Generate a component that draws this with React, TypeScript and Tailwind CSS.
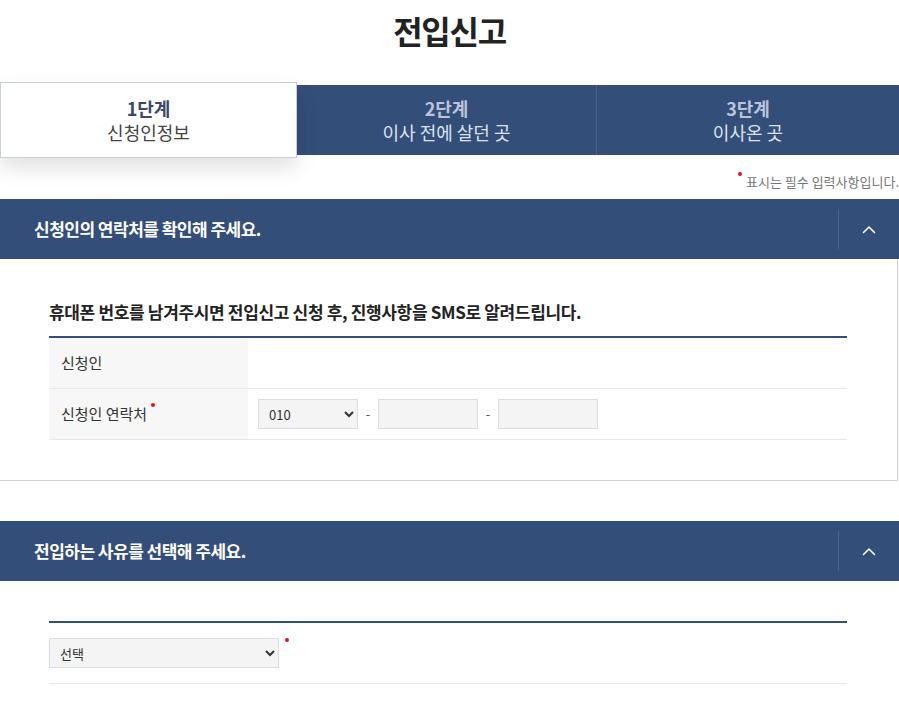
import React from 'react'

const NAVY = 'bg-[#344e7a]'

function Chevron() {
  return (
    <svg width="14" height="9" viewBox="0 0 14 9" fill="none" stroke="white" strokeWidth="1.6" strokeLinecap="round" strokeLinejoin="round">
      <path d="M1.5 7.5L7 2l5.5 5.5" />
    </svg>
  )
}

function SectionHeader({ title }: { title: string }) {
  return (
    <div className={`${NAVY} h-[60px] flex items-center`}>
      <h2 className="flex-1 pl-[34px] text-white text-[17px] font-bold tracking-[-0.03em]">{title}</h2>
      <div className="h-[40px] w-px bg-[#4b6390]" />
      <button className="w-[60px] h-full flex items-center justify-center">
        <Chevron />
      </button>
    </div>
  )
}

function Dot() {
  return <span className="block w-[4px] h-[4px] rounded-full bg-[#e0141e]" />
}

export default function App() {
  return (
    <div className="w-[899px] bg-white text-[#333]" style={{ fontFamily: '"Noto Sans CJK KR", "Noto Sans", sans-serif' }}>
      {/* Title */}
      <h1 className="text-center text-[32px] leading-[40px] font-bold text-[#222] pt-[10px] tracking-[-0.04em]">전입신고</h1>

      {/* Steps */}
      <div className={`mt-[35px] ${NAVY} h-[70px] flex items-stretch`}>
        <div className="w-[297px] -my-[3px] relative z-10 bg-white border border-[#c9cdd6] shadow-[0_10px_20px_rgba(0,0,0,0.12)] flex flex-col items-center justify-center">
          <div className="text-[18px] leading-[24px] font-bold text-[#3b4867]">1단계</div>
          <div className="text-[18px] leading-[24px] text-[#444]">신청인정보</div>
        </div>
        <div className="w-[300px] flex flex-col items-center justify-center border-r border-[#4b6390]">
          <div className="text-[18px] leading-[24px] font-bold text-[#bac5db]">2단계</div>
          <div className="text-[18px] leading-[24px] text-[#dde3ee]">이사 전에 살던 곳</div>
        </div>
        <div className="flex-1 flex flex-col items-center justify-center">
          <div className="text-[18px] leading-[24px] font-bold text-[#bac5db]">3단계</div>
          <div className="text-[18px] leading-[24px] text-[#dde3ee]">이사온 곳</div>
        </div>
      </div>

      {/* Required note */}
      <div className="h-[44px] flex items-start justify-end pt-[18px] whitespace-nowrap overflow-hidden">
        <span className="flex items-start text-[13px] leading-[18px] text-[#777]">
          <span className="-mt-[1px] mr-[4px]"><Dot /></span>
          표시는 필수 입력사항입니다.
        </span>
      </div>

      {/* Section 1 */}
      <section>
        <SectionHeader title="신청인의 연락처를 확인해 주세요." />
        <div className="mr-[1px] border-r border-b border-[#d2d2d2] pl-[49px] pr-[50px] pt-[41px] pb-[40px]">
          <h3 className="text-[17px] leading-[24px] font-bold text-[#222] tracking-[-0.02em] pb-[12px]">
            휴대폰 번호를 남겨주시면 전입신고 신청 후, 진행사항을 SMS로 알려드립니다.
          </h3>
          <div className="border-t-2 border-[#344e7a]">
            <div className="flex h-[51px] border-b border-[#e8e8e8]">
              <div className="w-[199px] bg-[#f7f7f7] flex items-center pl-[12px] text-[15px]">신청인</div>
              <div className="flex-1" />
            </div>
            <div className="flex h-[51px] border-b border-[#e8e8e8]">
              <div className="w-[199px] bg-[#f7f7f7] flex items-center pl-[12px] text-[15px]">
                신청인 연락처
                <span className="self-start mt-[14px] ml-[4px]"><Dot /></span>
              </div>
              <div className="flex-1 flex items-center pl-[10px] text-[13px] text-[#555]">
                <select className="w-[100px] h-[30px] bg-[#f4f4f4] border border-[#dcdcdc] pl-[6px] text-[13px] text-[#333]">
                  <option>010</option>
                </select>
                <span className="w-[20px] text-center">-</span>
                <input className="w-[100px] h-[30px] bg-[#f4f4f4] border border-[#dcdcdc]" />
                <span className="w-[20px] text-center">-</span>
                <input className="w-[100px] h-[30px] bg-[#f4f4f4] border border-[#dcdcdc]" />
              </div>
            </div>
          </div>
        </div>
      </section>

      {/* Section 2 */}
      <section className="mt-[40px]">
        <SectionHeader title="전입하는 사유를 선택해 주세요." />
        <div className="pl-[49px] pr-[52px] pt-[40px] pb-[40px]">
          <div className="border-t-2 border-[#344e7a]">
            <div className="flex items-center h-[61px] border-b border-[#e8e8e8]">
              <select className="w-[230px] h-[30px] bg-[#f4f4f4] border border-[#dcdcdc] pl-[6px] text-[13px] text-[#333]">
                <option>선택</option>
              </select>
              <span className="self-start mt-[15px] ml-[6px]"><Dot /></span>
            </div>
          </div>
        </div>
      </section>
    </div>
  )
}
